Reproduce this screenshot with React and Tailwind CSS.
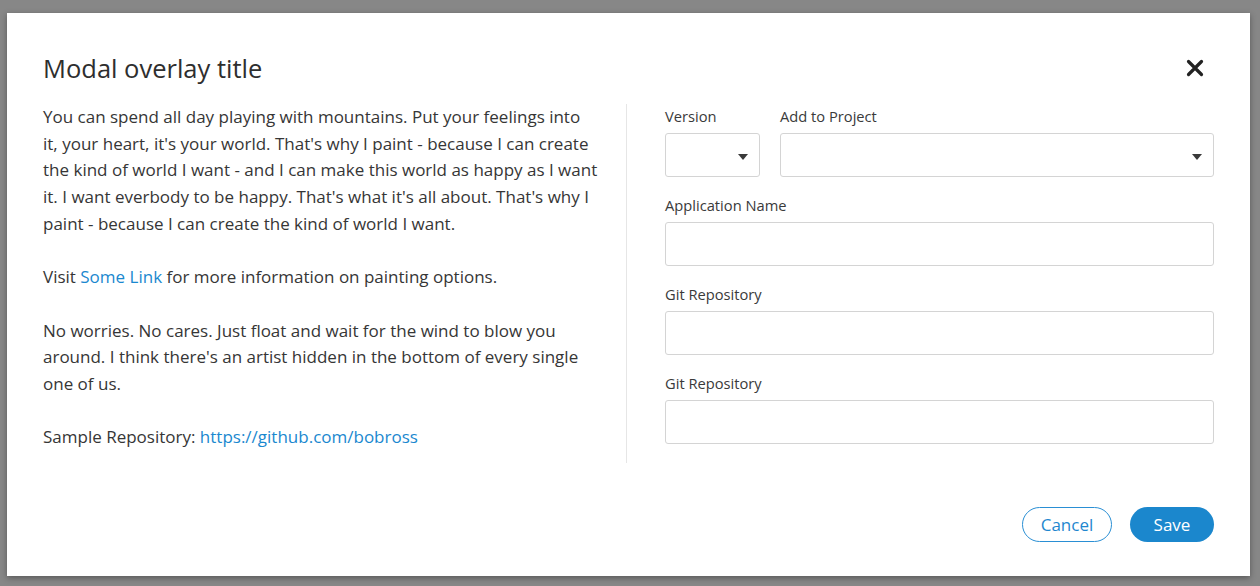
import React from "react";

function Caret() {
  return (
    <svg width="10" height="6" viewBox="0 0 10 6" className="absolute right-[11px] top-[20px]">
      <path d="M0 0 L10 0 L5 6 Z" fill="#3a3a3a" />
    </svg>
  );
}

function Select({ className }) {
  return (
    <div className={"relative h-[44px] rounded-[3px] border border-[#d4d4d4] bg-white " + className}>
      <Caret />
    </div>
  );
}

function Field({ label }) {
  return (
    <div className="flex flex-col">
      <div className="text-[14.7px] leading-[20px] text-[#3a3a3a]">{label}</div>
      <div className="mt-[7px] h-[44px] rounded-[3px] border border-[#d4d4d4] bg-white" />
    </div>
  );
}

export default function App() {
  return (
    <div
      className="h-[586px] w-[1260px] overflow-hidden bg-[#878787] pl-[7px] pt-[13px]"
      style={{ fontFamily: "'Open Sans', Lato, sans-serif" }}
    >
      <div className="flex h-[563px] w-[1243px] flex-col bg-white px-[36px] shadow-[0_2px_6px_rgba(0,0,0,0.35)]">
        <div className="mt-[39px] flex h-[32px] items-center justify-between">
          <h1 className="text-[25.5px] leading-[32px] text-[#2e2e2e]">Modal overlay title</h1>
          <svg width="18" height="18" viewBox="0 0 18 18" className="mr-[10px]">
            <path d="M2.5 2.5 L15.5 15.5 M15.5 2.5 L2.5 15.5" stroke="#222" strokeWidth="3.2" strokeLinecap="round" />
          </svg>
        </div>

        <div className="mt-[20px] flex">
          <div className="w-[584px] whitespace-nowrap border-r border-[#e6e6e6] pb-[12px] pr-[20px] text-[17px] leading-[26.7px] text-[#363636]">
            <p>
              You can spend all day playing with mountains. Put your feelings into<br />
              it, your heart, it's your world. That's why I paint - because I can create<br />
              the kind of world I want - and I can make this world as happy as I want<br />
              it. I want everbody to be happy. That's what it's all about. That's why I<br />
              paint - because I can create the kind of world I want.
            </p>
            <p className="mt-[26.7px]">
              Visit <a className="text-[#1a88cf]">Some Link</a> for more information on painting options.
            </p>
            <p className="mt-[26.7px]">
              No worries. No cares. Just float and wait for the wind to blow you<br />
              around. I think there's an artist hidden in the bottom of every single<br />
              one of us.
            </p>
            <p className="mt-[26.7px]">
              Sample Repository: <a className="text-[#1a88cf]">https://github.com/bobross</a>
            </p>
          </div>

          <div className="flex flex-1 flex-col gap-[18px] pl-[38px] pt-[2px]">
            <div className="flex gap-[20px]">
              <div className="flex w-[95px] flex-col">
                <div className="text-[14.7px] leading-[20px] text-[#3a3a3a]">Version</div>
                <Select className="mt-[7px]" />
              </div>
              <div className="flex flex-1 flex-col">
                <div className="text-[14.7px] leading-[20px] text-[#3a3a3a]">Add to Project</div>
                <Select className="mt-[7px]" />
              </div>
            </div>
            <Field label="Application Name" />
            <Field label="Git Repository" />
            <Field label="Git Repository" />
          </div>
        </div>

        <div className="mt-[44px] flex justify-end gap-[18px]">
          <button className="h-[35px] w-[90px] rounded-full border border-[#2a8fd4] bg-white text-[17px] text-[#1f87cf]">
            Cancel
          </button>
          <button className="h-[35px] w-[84px] rounded-full bg-[#1b87cd] text-[17px] text-white">
            Save
          </button>
        </div>
      </div>
    </div>
  );
}
